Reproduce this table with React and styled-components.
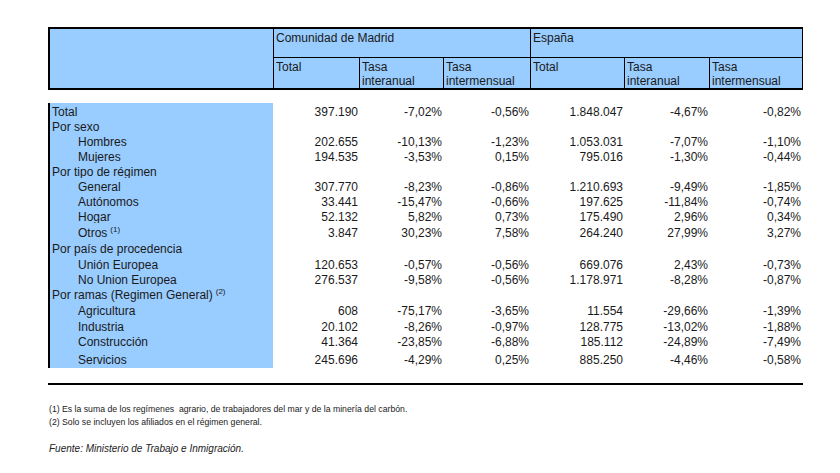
import React from "react";
import styled, { createGlobalStyle } from "styled-components";

const BLUE = "#99ccff";
const COLS = "225px 86px 84px 87px 94px 85px 93px";

const GlobalStyle = createGlobalStyle`
  body {
    margin: 0;
    background: #ffffff;
    font-family: "Liberation Sans", Arial, sans-serif;
    color: #1a1a1a;
  }
`;

const Page = styled.div`
  padding: 27px 0 0 48px;
  width: 840px;
  height: 473px;
  box-sizing: border-box;
`;

const HeaderTable = styled.div`
  display: grid;
  grid-template-columns: 223px 86px 84px 87px 94px 85px 93px;
  grid-template-rows: 29px 30px;
  width: 755px;
  box-sizing: border-box;
  background: ${BLUE};
  border-top: 2px solid #000;
  border-bottom: 2px solid #000;
  border-left: 2px solid #000;
  border-right: 1px solid #000;
  font-size: 12px;
  line-height: 14px;
`;

const BlankCell = styled.div`
  grid-column: 1;
  grid-row: 1 / span 2;
`;

const RegionCell = styled.div`
  grid-column: ${(p) => p.$span};
  grid-row: 1;
  border-left: 1px solid #000;
  border-bottom: 1px solid #000;
  padding: 2px 0 0 2px;
`;

const SubCell = styled.div`
  grid-row: 2;
  border-left: 1px solid #000;
  padding: 2px 0 0 2px;
`;

const Body = styled.div`
  margin-top: 13px;
  display: flex;
  flex-direction: column;
  font-size: 12px;
`;

const Row = styled.div`
  display: grid;
  grid-template-columns: ${COLS};
  grid-template-rows: ${(p) => p.$h}px;
  height: ${(p) => p.$h}px;
  line-height: ${(p) => p.$h + 3}px;
`;

const Label = styled.div`
  box-sizing: border-box;
  background: ${BLUE};
  border-left: 2px solid #000;
  padding-left: ${(p) => (p.$sub ? 28 : 2)}px;
  white-space: nowrap;
`;

const Num = styled.div`
  text-align: right;
  padding-right: 1px;
  white-space: nowrap;
`;

const Sup = styled.span`
  font-size: 8px;
  margin-left: 3px;
  position: relative;
  top: -5px;
`;

const Rule = styled.div`
  margin-top: 15px;
  width: 755px;
  height: 2px;
  background: #000;
`;

const Notes = styled.div`
  margin-top: 18px;
  padding-left: 1px;
  font-size: 8.7px;
  line-height: 13px;
  color: #222;
`;

const Source = styled.div`
  margin-top: 14px;
  padding-left: 1px;
  font-size: 10px;
  font-style: italic;
  color: #222;
`;

const rows = [
  { l: "Total", h: 15, v: ["397.190", "-7,02%", "-0,56%", "1.848.047", "-4,67%", "-0,82%"] },
  { l: "Por sexo", h: 15 },
  { l: "Hombres", sub: true, h: 15, v: ["202.655", "-10,13%", "-1,23%", "1.053.031", "-7,07%", "-1,10%"] },
  { l: "Mujeres", sub: true, h: 15, v: ["194.535", "-3,53%", "0,15%", "795.016", "-1,30%", "-0,44%"] },
  { l: "Por tipo de régimen", h: 15 },
  { l: "General", sub: true, h: 15, v: ["307.770", "-8,23%", "-0,86%", "1.210.693", "-9,49%", "-1,85%"] },
  { l: "Autónomos", sub: true, h: 15, v: ["33.441", "-15,47%", "-0,66%", "197.625", "-11,84%", "-0,74%"] },
  { l: "Hogar", sub: true, h: 15, v: ["52.132", "5,82%", "0,73%", "175.490", "2,96%", "0,34%"] },
  { l: "Otros", sup: "(1)", sub: true, h: 17, v: ["3.847", "30,23%", "7,58%", "264.240", "27,99%", "3,27%"] },
  { l: "Por país de procedencia", h: 16 },
  { l: "Unión Europea", sub: true, h: 15, v: ["120.653", "-0,57%", "-0,56%", "669.076", "2,43%", "-0,73%"] },
  { l: "No Union Europea", sub: true, h: 15, v: ["276.537", "-9,58%", "-0,56%", "1.178.971", "-8,28%", "-0,87%"] },
  { l: "Por ramas (Regimen General)", sup: "(2)", h: 16 },
  { l: "Agricultura", sub: true, h: 16, v: ["608", "-75,17%", "-3,65%", "11.554", "-29,66%", "-1,39%"] },
  { l: "Industria", sub: true, h: 15, v: ["20.102", "-8,26%", "-0,97%", "128.775", "-13,02%", "-1,88%"] },
  { l: "Construcción", sub: true, h: 16, v: ["41.364", "-23,85%", "-6,88%", "185.112", "-24,89%", "-7,49%"] },
  { l: "Servicios", sub: true, h: 19, v: ["245.696", "-4,29%", "0,25%", "885.250", "-4,46%", "-0,58%"] },
];

const subHeads = ["Total", "Tasa\ninteranual", "Tasa\nintermensual"];

function HeadText({ text }) {
  return text.split("\n").map((t, i) => <div key={i}>{t}</div>);
}

export default function App() {
  return (
    <Page>
      <GlobalStyle />
      <HeaderTable>
        <BlankCell />
        <RegionCell $span="2 / span 3">Comunidad de Madrid</RegionCell>
        <RegionCell $span="5 / span 3">España</RegionCell>
        {[...subHeads, ...subHeads].map((h, i) => (
          <SubCell key={i}>
            <HeadText text={h} />
          </SubCell>
        ))}
      </HeaderTable>

      <Body>
        {rows.map((r) => (
          <Row key={r.l} $h={r.h}>
            <Label $sub={r.sub}>
              {r.l}
              {r.sup && <Sup>{r.sup}</Sup>}
            </Label>
            {(r.v || ["", "", "", "", "", ""]).map((n, i) => (
              <Num key={i}>{n}</Num>
            ))}
          </Row>
        ))}
      </Body>

      <Rule />

      <Notes>
        <div>(1) Es la suma de los regímenes&nbsp; agrario, de trabajadores del mar y de la minería del carbón.</div>
        <div>(2) Solo se incluyen los afiliados en el régimen general.</div>
      </Notes>
      <Source>Fuente: Ministerio de Trabajo e Inmigración.</Source>
    </Page>
  );
}
